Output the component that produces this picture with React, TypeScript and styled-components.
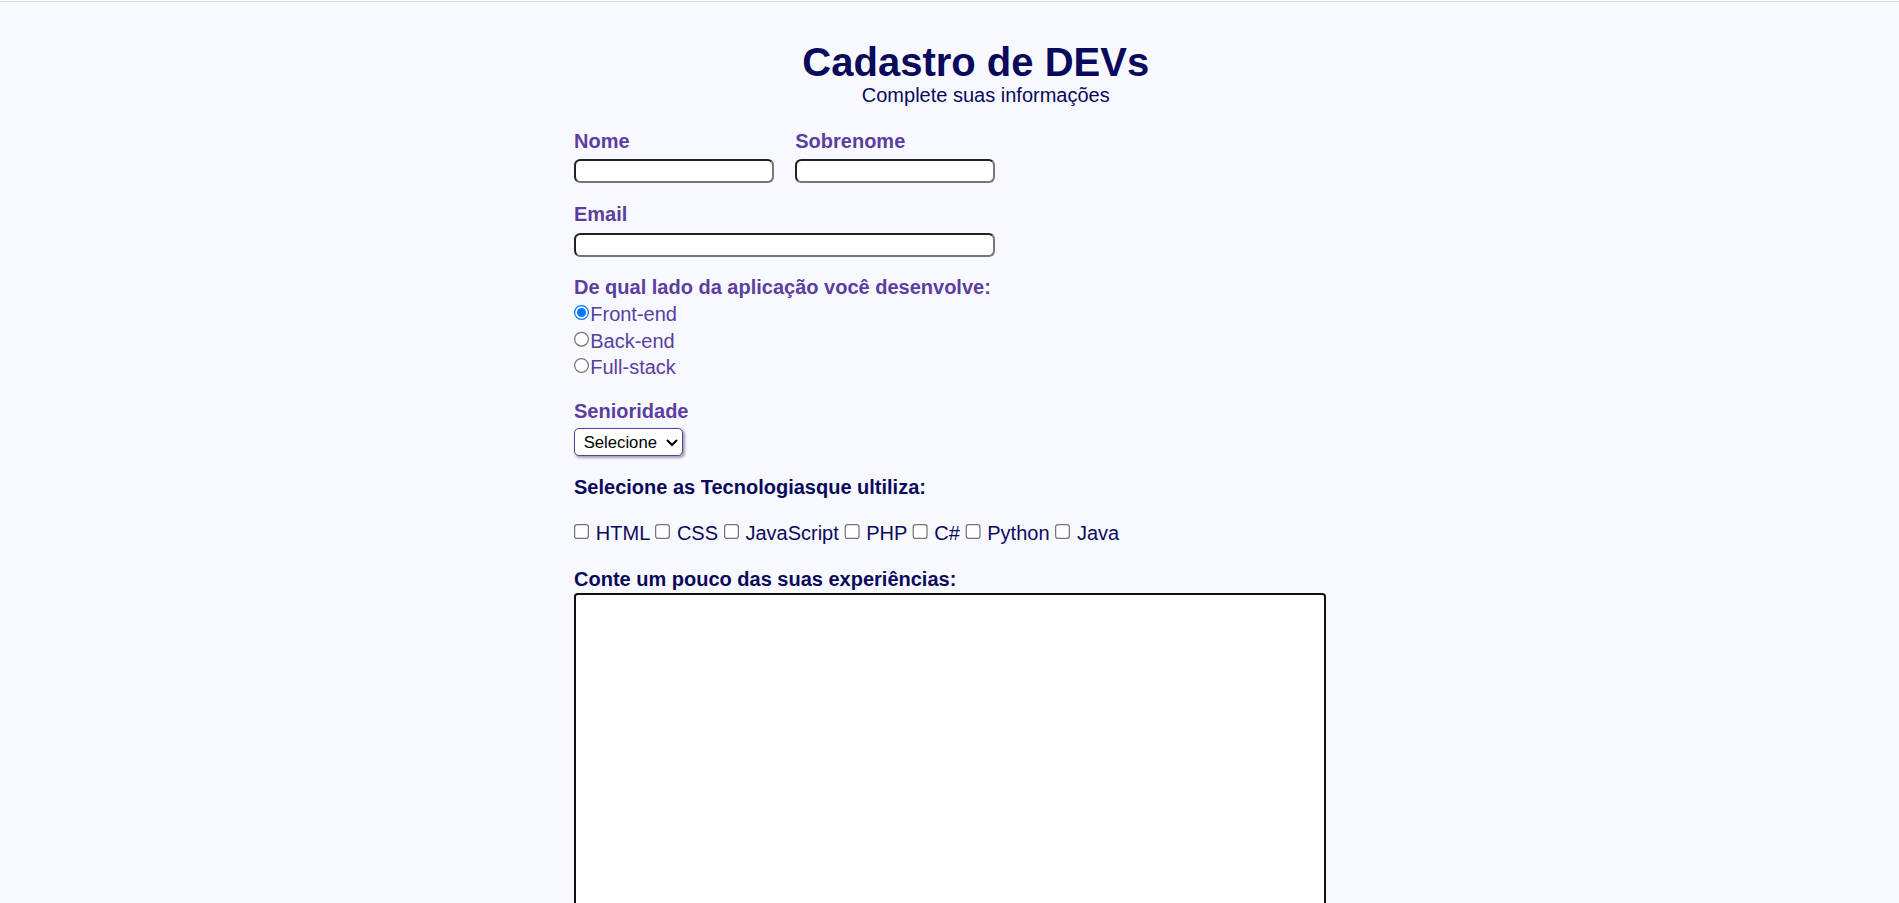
import styled, { createGlobalStyle } from "styled-components";

const GlobalStyle = createGlobalStyle`
  html, body {
    margin: 0;
    padding: 0;
    background: #f8f9ff;
    font-family: "Liberation Sans", Arial, sans-serif;
  }
`;

const TopRule = styled.div`
  height: 1px;
  margin-top: 1px;
  background: #d9d9d9;
`;

const Page = styled.div`
  zoom: 1.25;
  padding-top: 30.5px;
  padding-bottom: 40px;
`;

const Header = styled.header`
  display: flex;
  flex-direction: column;
  align-items: center;
`;

const Title = styled.h1`
  margin: 0;
  padding-left: 42px;
  font-size: 32px;
  font-weight: bold;
  color: #0a0a5c;
`;

const Subtitle = styled.p`
  margin: -0.8px 0 0;
  padding-left: 58px;
  font-size: 16px;
  color: #0a0a5c;
`;

const Form = styled.form`
  width: 600px;
  margin: 18.6px auto 0;
  position: relative;
  left: -0.4px;
  display: flex;
  flex-direction: column;
  gap: 16px;
`;

const Row = styled.div`
  display: grid;
  grid-template-columns: 160px 160px;
  column-gap: 17px;
`;

const Field = styled.div<{ $gap?: number; $offset?: number }>`
  display: flex;
  flex-direction: column;
  align-items: flex-start;
  gap: ${(p) => p.$gap ?? 4.8}px;
  margin-top: ${(p) => p.$offset ?? 0}px;
`;

const Label = styled.label<{ $dark?: boolean }>`
  font-size: 16px;
  font-weight: bold;
  color: ${(p) => (p.$dark ? "#0a0a5c" : "#5b3e9e")};
`;

const TextInput = styled.input<{ $wide?: boolean }>`
  width: ${(p) => (p.$wide ? 337 : 160)}px;
  height: 19.2px;
  box-sizing: border-box;
  padding: 0 3px;
  margin: 0;
  border: 2px inset #767676;
  border-radius: 5px;
  background: #fff;
  font-size: 13.33px;
`;

const Options = styled.div`
  display: flex;
  flex-direction: column;
  gap: 2.9px;
`;

const Option = styled.label`
  font-size: 16px;
  color: #5b3e9e;
`;

const Radio = styled.input`
  margin: 0;
  width: 13px;
  height: 13px;
`;

const Select = styled.select`
  width: 87px;
  height: 22.5px;
  margin: 0;
  padding: 0 3px;
  border: 1px solid #5b3e9e;
  border-radius: 4px;
  background: #fff;
  box-shadow: 1.5px 1.5px 2px rgba(0, 0, 0, 0.35);
  font-family: "Liberation Sans", Arial, sans-serif;
  font-size: 13.33px;
  color: #000;
`;

const Techs = styled.div`
  font-size: 16px;
  color: #0a0a5c;
`;

const Check = styled.input`
  margin: 0;
  width: 13px;
  height: 13px;
`;

const Experience = styled.textarea`
  width: 601.6px;
  height: 300px;
  box-sizing: border-box;
  margin: 0;
  border: 1.6px solid #111;
  border-radius: 3px;
  background: #fff;
  resize: vertical;
`;

const sides = ["Front-end", "Back-end", "Full-stack"];
const techs = ["HTML", "CSS", "JavaScript", "PHP", "C#", "Python", "Java"];

const App = () => {
  return (
    <>
      <GlobalStyle />
      <TopRule />
      <Page>
        <Header>
          <Title>Cadastro de DEVs</Title>
          <Subtitle>Complete suas informações</Subtitle>
        </Header>
        <Form onSubmit={(e) => e.preventDefault()}>
          <Row>
            <Field>
              <Label htmlFor="nome">Nome</Label>
              <TextInput id="nome" type="text" />
            </Field>
            <Field>
              <Label htmlFor="sobrenome">Sobrenome</Label>
              <TextInput id="sobrenome" type="text" />
            </Field>
          </Row>
          <Field $gap={5.4}>
            <Label htmlFor="email">Email</Label>
            <TextInput id="email" type="email" $wide />
          </Field>
          <Field $gap={3} $offset={-0.8}>
            <Label>De qual lado da aplicação você desenvolve:</Label>
            <Options>
              {sides.map((side, index) => (
                <Option key={side}>
                  <Radio type="radio" name="lado" defaultChecked={index === 0} />
                  {side}
                </Option>
              ))}
            </Options>
          </Field>
          <Field $gap={3.8} $offset={1}>
            <Label htmlFor="senioridade">Senioridade</Label>
            <Select id="senioridade" defaultValue="">
              <option value="">Selecione</option>
              <option value="junior">Júnior</option>
              <option value="pleno">Pleno</option>
              <option value="senior">Sênior</option>
            </Select>
          </Field>
          <Field $gap={18.2}>
            <Label $dark>Selecione as Tecnologiasque ultiliza:</Label>
            <Techs>
              {techs.map((tech, index) => (
                <span key={tech}>
                  {index > 0 && " "}
                  <Check type="checkbox" id={`tech-${index}`} />{" "}
                  <label htmlFor={`tech-${index}`}>{tech}</label>
                </span>
              ))}
            </Techs>
          </Field>
          <Field $gap={1.2} $offset={2.5}>
            <Label $dark htmlFor="experiencia">
              Conte um pouco das suas experiências:
            </Label>
            <Experience id="experiencia" />
          </Field>
        </Form>
      </Page>
    </>
  );
};

export default App;
